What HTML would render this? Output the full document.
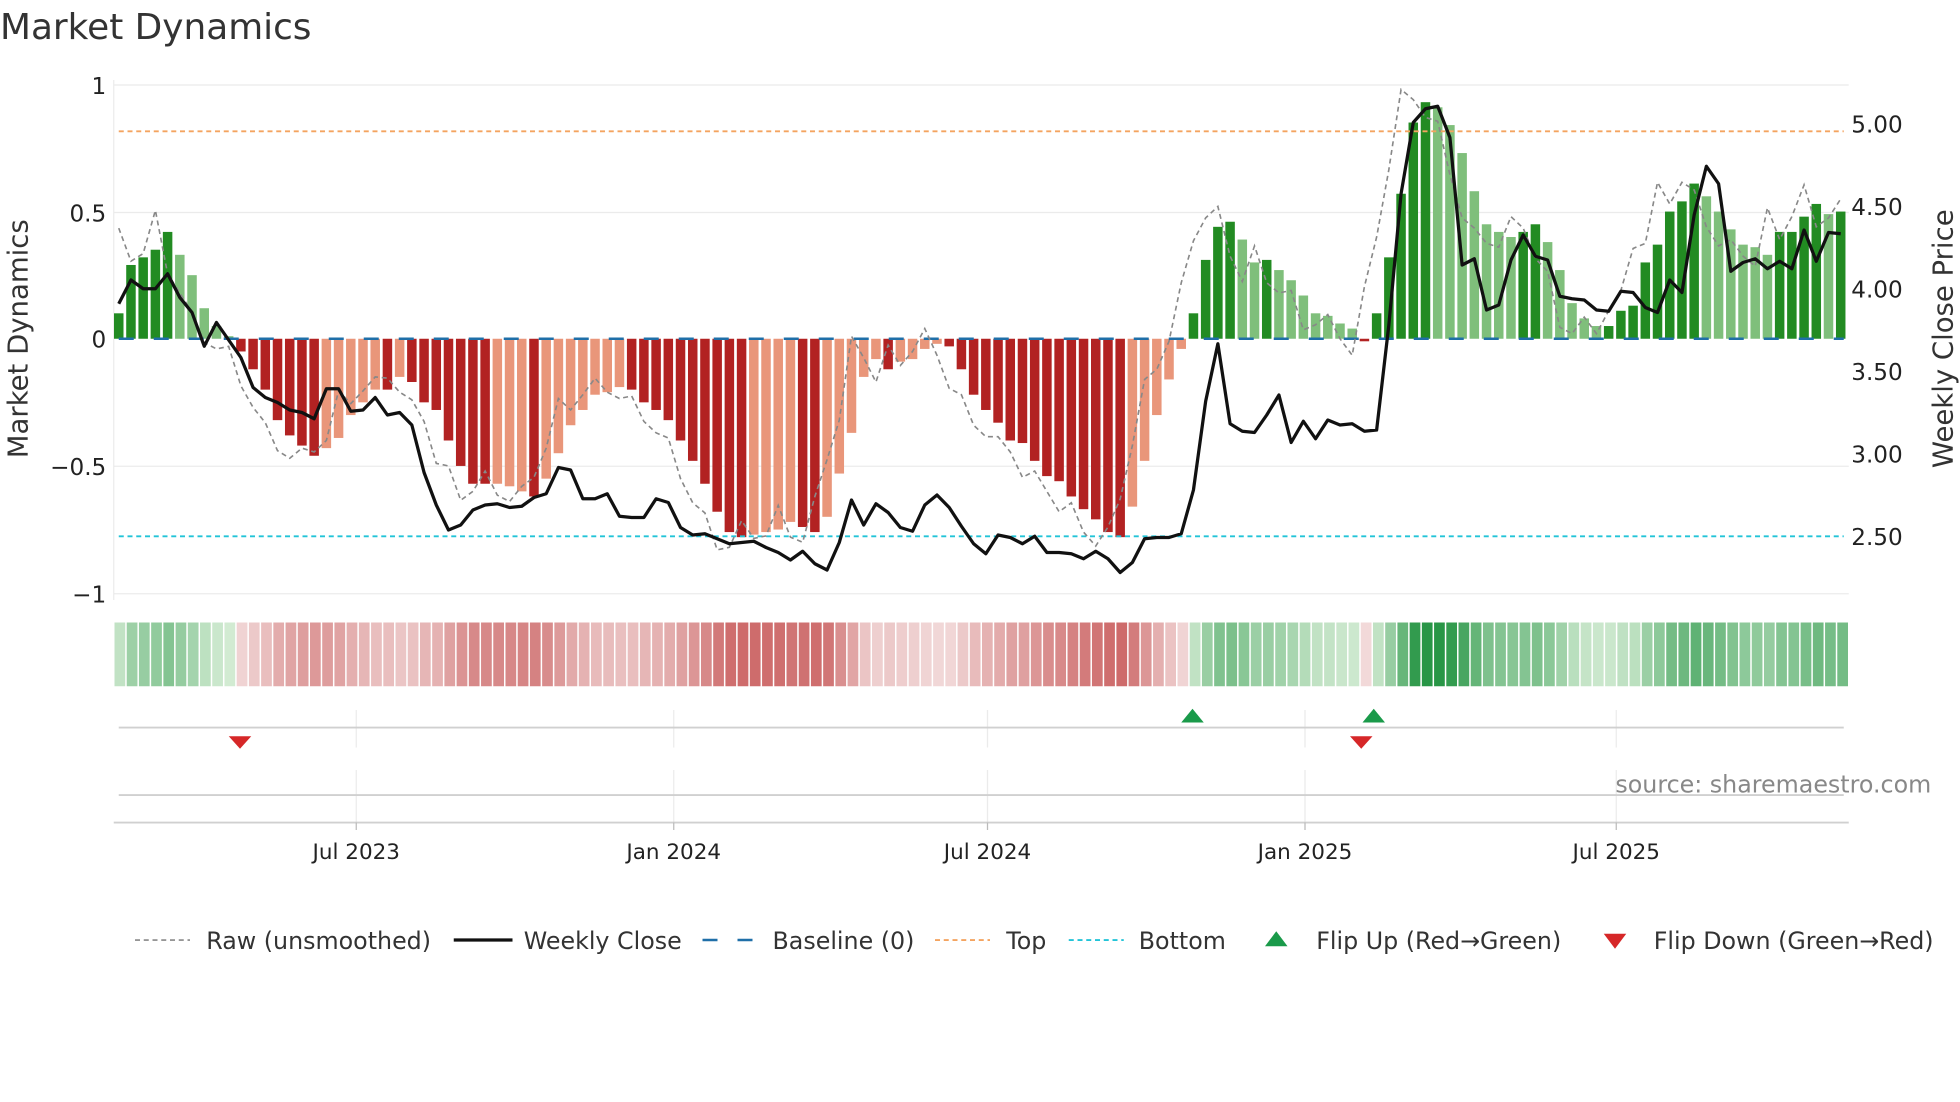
<!DOCTYPE html>
<html><head><meta charset="utf-8"><style>
html,body{margin:0;padding:0;background:#fff;width:1960px;height:1102px;overflow:hidden}
svg{display:block;font-family:"DejaVu Sans","Liberation Sans",sans-serif}
</style></head><body>
<svg id="s" width="1960" height="1102" viewBox="0 0 1568 881.6" xmlns="http://www.w3.org/2000/svg">
<text x="0" y="31" font-size="28.7" fill="#333">Market Dynamics</text>
<g stroke="#ebebeb" stroke-width="1">
<line x1="91" y1="68" x2="1479" y2="68"/><line x1="91" y1="170" x2="1479" y2="170"/><line x1="91" y1="373" x2="1479" y2="373"/><line x1="91" y1="475" x2="1479" y2="475"/>
<line x1="91" y1="64" x2="91" y2="480"/>
<line x1="285" y1="568" x2="285" y2="598"/><line x1="539" y1="568" x2="539" y2="598"/><line x1="790" y1="568" x2="790" y2="598"/><line x1="1044" y1="568" x2="1044" y2="598"/><line x1="1293" y1="568" x2="1293" y2="598"/>
<line x1="285" y1="616" x2="285" y2="658"/><line x1="539" y1="616" x2="539" y2="658"/><line x1="790" y1="616" x2="790" y2="658"/><line x1="1044" y1="616" x2="1044" y2="658"/><line x1="1293" y1="616" x2="1293" y2="658"/>
</g>
<g stroke="#d0d0d0" stroke-width="1.5"><line x1="95" y1="582" x2="1475" y2="582"/><line x1="95" y1="636" x2="1475" y2="636"/><line x1="91" y1="658" x2="1479" y2="658"/></g>
<g stroke="#bbb"><line x1="285" y1="658" x2="285" y2="664"/><line x1="539" y1="658" x2="539" y2="664"/><line x1="790" y1="658" x2="790" y2="664"/><line x1="1044" y1="658" x2="1044" y2="664"/><line x1="1293" y1="658" x2="1293" y2="664"/></g>
<g id="bars"></g><g id="heat"></g>
<line x1="95" y1="105" x2="1475" y2="105" stroke="#f4a460" stroke-width="1.5" stroke-dasharray="4,3"/>
<line x1="95" y1="429" x2="1475" y2="429" stroke="#22c4d8" stroke-width="1.5" stroke-dasharray="4,3"/>
<line x1="95" y1="271" x2="1475" y2="271" stroke="#1f6fa8" stroke-width="2" stroke-dasharray="12,16"/>
<polyline id="raw" fill="none" stroke="#888" stroke-width="1.3" stroke-dasharray="4,3"/>
<polyline id="px" fill="none" stroke="#111" stroke-width="2.6" stroke-linejoin="round"/>
<g fill="#1a9a4a"><polygon points="945,578 963,578 954,567"/><polygon points="1090,578 1108,578 1099,567"/></g>
<g fill="#d62728"><polygon points="183,589 201,589 192,599"/><polygon points="1080,589 1098,589 1089,599"/></g>
<g font-size="18.5" fill="#222" text-anchor="end">
<text x="85" y="75">1</text><text x="85" y="177">0.5</text><text x="85" y="278">0</text><text x="85" y="380">−0.5</text><text x="85" y="482">−1</text></g>
<g font-size="18.5" fill="#222">
<text x="1481" y="106">5.00</text><text x="1481" y="172">4.50</text><text x="1481" y="238">4.00</text><text x="1481" y="304">3.50</text><text x="1481" y="370">3.00</text><text x="1481" y="436">2.50</text></g>
<text transform="translate(22,271) rotate(-90)" font-size="22" fill="#333" text-anchor="middle">Market Dynamics</text>
<text transform="translate(1562,271) rotate(-90)" font-size="22" fill="#333" text-anchor="middle">Weekly Close Price</text>
<text x="1545" y="634" font-size="19" fill="#888" text-anchor="end">source: sharemaestro.com</text>
<g font-size="17.2" fill="#222" text-anchor="middle"><text x="285" y="687">Jul 2023</text><text x="539" y="687">Jan 2024</text><text x="790" y="687">Jul 2024</text><text x="1044" y="687">Jan 2025</text><text x="1293" y="687">Jul 2025</text></g>
<g font-size="19" fill="#333">
<line x1="108" y1="752" x2="152" y2="752" stroke="#888" stroke-width="1.3" stroke-dasharray="4,3"/><text x="165" y="759">Raw (unsmoothed)</text>
<line x1="363" y1="752" x2="410" y2="752" stroke="#111" stroke-width="2.6"/><text x="419" y="759">Weekly Close</text>
<line x1="562" y1="752" x2="606" y2="752" stroke="#1f6fa8" stroke-width="2" stroke-dasharray="12,16"/><text x="618" y="759">Baseline (0)</text>
<line x1="748" y1="752" x2="792" y2="752" stroke="#f4a460" stroke-width="1.5" stroke-dasharray="4,3"/><text x="805" y="759">Top</text>
<line x1="855" y1="752" x2="899" y2="752" stroke="#22c4d8" stroke-width="1.5" stroke-dasharray="4,3"/><text x="911" y="759">Bottom</text>
<polygon points="1012,757 1030,757 1021,745" fill="#1a9a4a"/><text x="1053" y="759">Flip Up (Red→Green)</text>
<polygon points="1283,747 1301,747 1292,759" fill="#d62728"/><text x="1323" y="759">Flip Down (Green→Red)</text>
</g>
</svg>
<script>
var v=[.1,.29,.32,.35,.42,.33,.25,.12,.05,.01,-.05,-.12,-.2,-.32,-.38,-.42,-.46,-.43,-.39,-.3,-.25,-.2,-.2,-.15,-.17,-.25,-.28,-.4,-.5,-.57,-.57,-.57,-.58,-.6,-.62,-.55,-.45,-.34,-.28,-.22,-.21,-.19,-.2,-.25,-.28,-.32,-.4,-.48,-.57,-.68,-.76,-.78,-.77,-.76,-.75,-.72,-.74,-.76,-.7,-.53,-.37,-.15,-.08,-.12,-.09,-.08,-.04,-.02,-.03,-.12,-.22,-.28,-.33,-.4,-.41,-.48,-.54,-.56,-.62,-.67,-.71,-.76,-.78,-.66,-.48,-.3,-.16,-.04,.1,.31,.44,.46,.39,.3,.31,.27,.23,.17,.1,.09,.06,.04,-.01,.1,.32,.57,.85,.93,.91,.84,.73,.58,.45,.42,.4,.42,.45,.38,.27,.14,.08,.05,.05,.11,.13,.3,.37,.5,.54,.61,.56,.5,.43,.37,.36,.33,.42,.42,.48,.53,.49,.5];
var c=[1,1,1,1,1,0,0,0,0,0,1,1,1,1,1,1,1,0,0,0,0,0,1,0,1,1,1,1,1,1,1,0,0,0,1,0,0,0,0,0,0,0,1,1,1,1,1,1,1,1,1,1,0,0,0,0,1,1,0,0,0,0,0,1,0,0,0,0,1,1,1,1,1,1,1,1,1,1,1,1,1,1,1,0,0,0,0,0,1,1,1,1,0,0,1,0,0,0,0,0,0,0,1,1,1,1,1,1,0,0,0,0,0,0,0,1,1,0,0,0,0,0,1,1,1,1,1,1,1,1,0,0,0,0,0,0,1,1,1,1,0,1];
var p=[243,224,231,231,219,238,250,277,258,272,286,310,318,322,328,330,335,311,311,329,328,318,332,330,340,378,404,424,420,408,404,403,406,405,398,395,374,376,399,399,395,413,414,414,399,402,422,428,427,431,435,434,433,438,442,448,441,451,456,434,400,420,403,410,422,425,404,396,406,421,435,443,428,430,435,429,442,442,443,447,441,447,458,450,431,430,430,427,392,321,275,339,345,346,332,316,354,337,351,336,340,339,345,344,260,155,98,87,85,110,212,207,248,244,208,188,205,208,237,239,240,248,249,233,234,246,250,224,234,172,133,147,217,210,207,215,209,215,184,209,186,187,178];
var NS="http://www.w3.org/2000/svg",b=document.getElementById('bars'),h=document.getElementById('heat');
var dx=9.77,x0=95,n=v.length,W=(1479-91)/n;
function el(t,a,par){var e=document.createElementNS(NS,t);for(var k in a)e.setAttribute(k,a[k]);par.appendChild(e);}
function mix(a,b,t){return 'rgb('+a.map(function(q,i){return Math.round(q+(b[i]-q)*t)}).join(',')+')';}
var raw=[],pp=[];
for(var i=0;i<n;i++){var x=x0+i*dx,val=v[i],y=271-val*203.5;
var col=val>=0?(c[i]?'#228b22':'#7fbf7b'):(c[i]?'#b22222':'#e9967a');
el('rect',{x:x-3.8,y:Math.min(y,271),width:7.6,height:Math.max(Math.abs(271-y),1),fill:col},b);
var t=Math.min(1,Math.abs(val)/0.9);
var hc=val>=0?mix([212,236,212],[40,150,70],t):mix([242,218,218],[200,90,90],t);
el('rect',{x:91+i*W+0.6,y:498,width:W-1.2,height:51,fill:hc},h);
var nx=i+1<n?v[i+1]:val,r=Math.max(-0.98,Math.min(0.98,1.5*nx-0.5*val+(i%3==0?0.05:-0.03)));
raw.push(x+','+(271-r*203.5));}
for(var i=0;i<n;i++)pp.push((x0+i*dx)+','+p[i]);
document.getElementById('raw').setAttribute('points',raw.join(' '));
document.getElementById('px').setAttribute('points',pp.join(' '));
</script>
</body></html>
